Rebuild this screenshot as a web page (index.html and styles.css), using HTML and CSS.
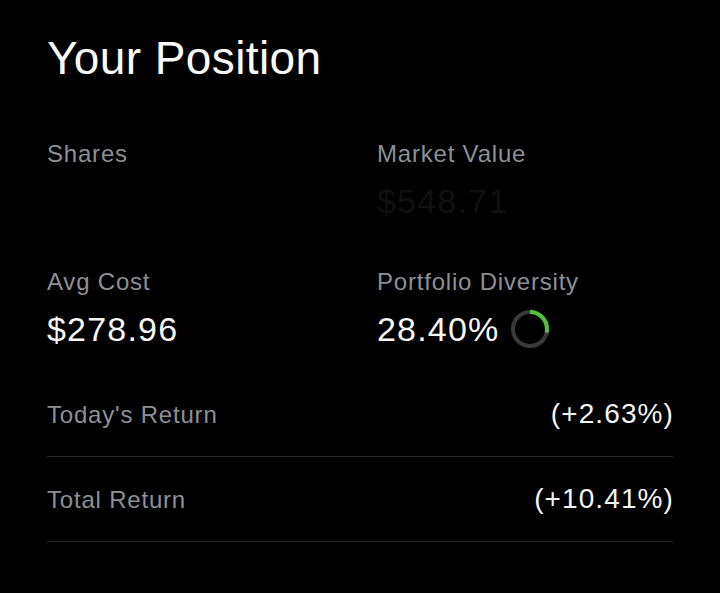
FILE: index.html
```html
<!DOCTYPE html>
<html lang="en">
<head>
<meta charset="utf-8">
<title>Your Position</title>
<link rel="stylesheet" href="styles.css">
</head>
<body>
<main class="position">
  <h1 class="title">Your Position</h1>
  <div class="stats">
    <div class="stat">
      <div class="label">Shares</div>
      <div class="value value-hidden">&nbsp;</div>
    </div>
    <div class="stat">
      <div class="label">Market Value</div>
      <div class="value value-dim">$548.71</div>
    </div>
    <div class="stat">
      <div class="label">Avg Cost</div>
      <div class="value">$278.96</div>
    </div>
    <div class="stat">
      <div class="label">Portfolio Diversity</div>
      <div class="value value-ring">
        <span>28.40%</span>
        <svg class="ring" width="38" height="38" viewBox="0 0 38 38">
          <circle cx="19" cy="19" r="17" fill="none" stroke="#3a3a3a" stroke-width="4"/>
          <circle cx="19" cy="19" r="17" fill="none" stroke="#4ec23a" stroke-width="4" stroke-dasharray="30.3 200" transform="rotate(-90 19 19)"/>
        </svg>
      </div>
    </div>
  </div>
  <div class="returns">
    <div class="row">
      <span class="label">Today's Return</span>
      <span class="row-value">(+2.63%)</span>
    </div>
    <div class="row">
      <span class="label">Total Return</span>
      <span class="row-value">(+10.41%)</span>
    </div>
  </div>
</main>
</body>
</html>
```
FILE: styles.css
```css
html, body {
  margin: 0;
  padding: 0;
  background: #000;
}
body {
  font-family: "Liberation Sans", Arial, sans-serif;
  color: #f4f4f4;
}
.position {
  padding: 30px 47px 0 47px;
}
.title {
  margin: 0;
  font-size: 46px;
  line-height: 56px;
  font-weight: 400;
  letter-spacing: 0.4px;
  color: #fafafa;
}
.stats {
  margin-top: 53px;
  display: grid;
  grid-template-columns: 330px 1fr;
  row-gap: 45px;
}
.stat {
  display: flex;
  flex-direction: column;
  gap: 11px;
}
.label {
  font-size: 24px;
  line-height: 30px;
  color: #8c9095;
  letter-spacing: 0.8px;
}
.value {
  font-size: 34px;
  line-height: 42px;
  letter-spacing: 1.2px;
  color: #f6f6f6;
}
.value-dim {
  color: #101010;
}
.value-hidden {
  color: transparent;
}
.value-ring {
  display: flex;
  align-items: center;
  gap: 11px;
}
.ring {
  display: block;
}
.returns {
  margin-top: 22px;
}
.row {
  display: flex;
  justify-content: space-between;
  align-items: baseline;
  padding: 27px 0 26px;
  border-bottom: 1px solid #2a2a2a;
}
.row-value {
  font-size: 28px;
  line-height: 30px;
  letter-spacing: 1.1px;
  margin-right: -1px;
  color: #f4f4f4;
}
```
